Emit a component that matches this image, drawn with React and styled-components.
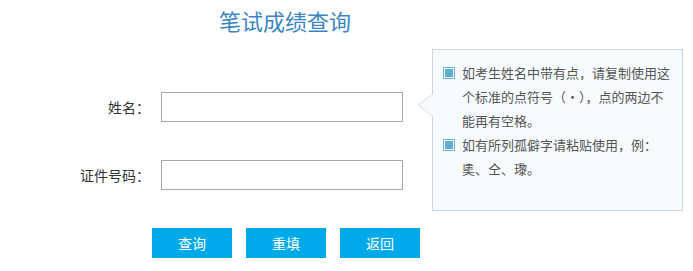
import React from "react";
import styled, { createGlobalStyle } from "styled-components";

const GlobalStyle = createGlobalStyle`
  html, body {
    margin: 0;
    padding: 0;
    background: #fff;
  }
  body {
    font-family: "Noto Sans CJK SC", "Noto Sans", sans-serif;
  }
`;

const Page = styled.div`
  width: 693px;
  height: 271px;
  overflow: hidden;
`;

const Title = styled.h1`
  margin: 0 0 0 219px;
  padding-top: 6px;
  font-size: 22px;
  line-height: 28px;
  font-weight: 400;
  color: #3a85c3;
`;

const Content = styled.div`
  display: flex;
  align-items: flex-start;
  margin-top: 15px;
`;

const Form = styled.form`
  display: flex;
  flex-direction: column;
  gap: 38px;
  padding-top: 43px;
  margin: 0;
`;

const Row = styled.div`
  display: flex;
  align-items: center;
  gap: 11px;
`;

const Label = styled.label`
  width: 150px;
  text-align: right;
  font-size: 14px;
  color: #333;
`;

const Input = styled.input`
  box-sizing: border-box;
  width: 242px;
  height: 30px;
  border: 1px solid #a9a9a9;
  padding: 0 6px;
  font-size: 14px;
  outline: none;
  background: #fff;
`;

const Buttons = styled.div`
  display: flex;
  gap: 14px;
  padding-left: 152px;
`;

const Button = styled.button`
  width: 80px;
  height: 30px;
  border: none;
  background: #00a9ea;
  color: #fff;
  font-family: inherit;
  font-size: 14px;
  padding: 0;
  cursor: pointer;
`;

const Tip = styled.div`
  position: relative;
  box-sizing: border-box;
  width: 251px;
  height: 162px;
  margin-left: 12px;
  padding: 11px 0 0 10px;
  border: 1px solid #c8d9e2;
  background: #f6fbfd;

  &::before,
  &::after {
    content: "";
    position: absolute;
    top: 43px;
    width: 0;
    height: 0;
    border-style: solid;
    border-width: 12px 15px 12px 0;
  }
  &::before {
    left: -15px;
    border-color: transparent #c8d9e2 transparent transparent;
  }
  &::after {
    left: -14px;
    border-color: transparent #f6fbfd transparent transparent;
  }
`;

const TipItem = styled.div`
  display: flex;
  align-items: flex-start;
  gap: 7px;
`;

const Check = styled.span`
  flex: none;
  box-sizing: border-box;
  width: 12px;
  height: 12px;
  margin-top: 6px;
  border: 1px solid #6fb4d2;
  padding: 1px;
  background: #5cafd3;
  background-clip: content-box;
`;

const TipText = styled.p`
  margin: 0;
  width: 212px;
  font-size: 13px;
  line-height: 24px;
  color: #555;
`;

export default function App() {
  return (
    <Page>
      <GlobalStyle />
      <Title>笔试成绩查询</Title>
      <Content>
        <Form onSubmit={(e) => e.preventDefault()}>
          <Row>
            <Label>姓名：</Label>
            <Input type="text" />
          </Row>
          <Row>
            <Label>证件号码：</Label>
            <Input type="text" />
          </Row>
          <Buttons>
            <Button type="submit">查询</Button>
            <Button type="reset">重填</Button>
            <Button type="button">返回</Button>
          </Buttons>
        </Form>
        <Tip>
          <TipItem>
            <Check />
            <TipText>如考生姓名中带有点，请复制使用这个标准的点符号（·），点的两边不能再有空格。</TipText>
          </TipItem>
          <TipItem>
            <Check />
            <TipText>如有所列孤僻字请粘贴使用，例：奊、仝、瓈。</TipText>
          </TipItem>
        </Tip>
      </Content>
    </Page>
  );
}
